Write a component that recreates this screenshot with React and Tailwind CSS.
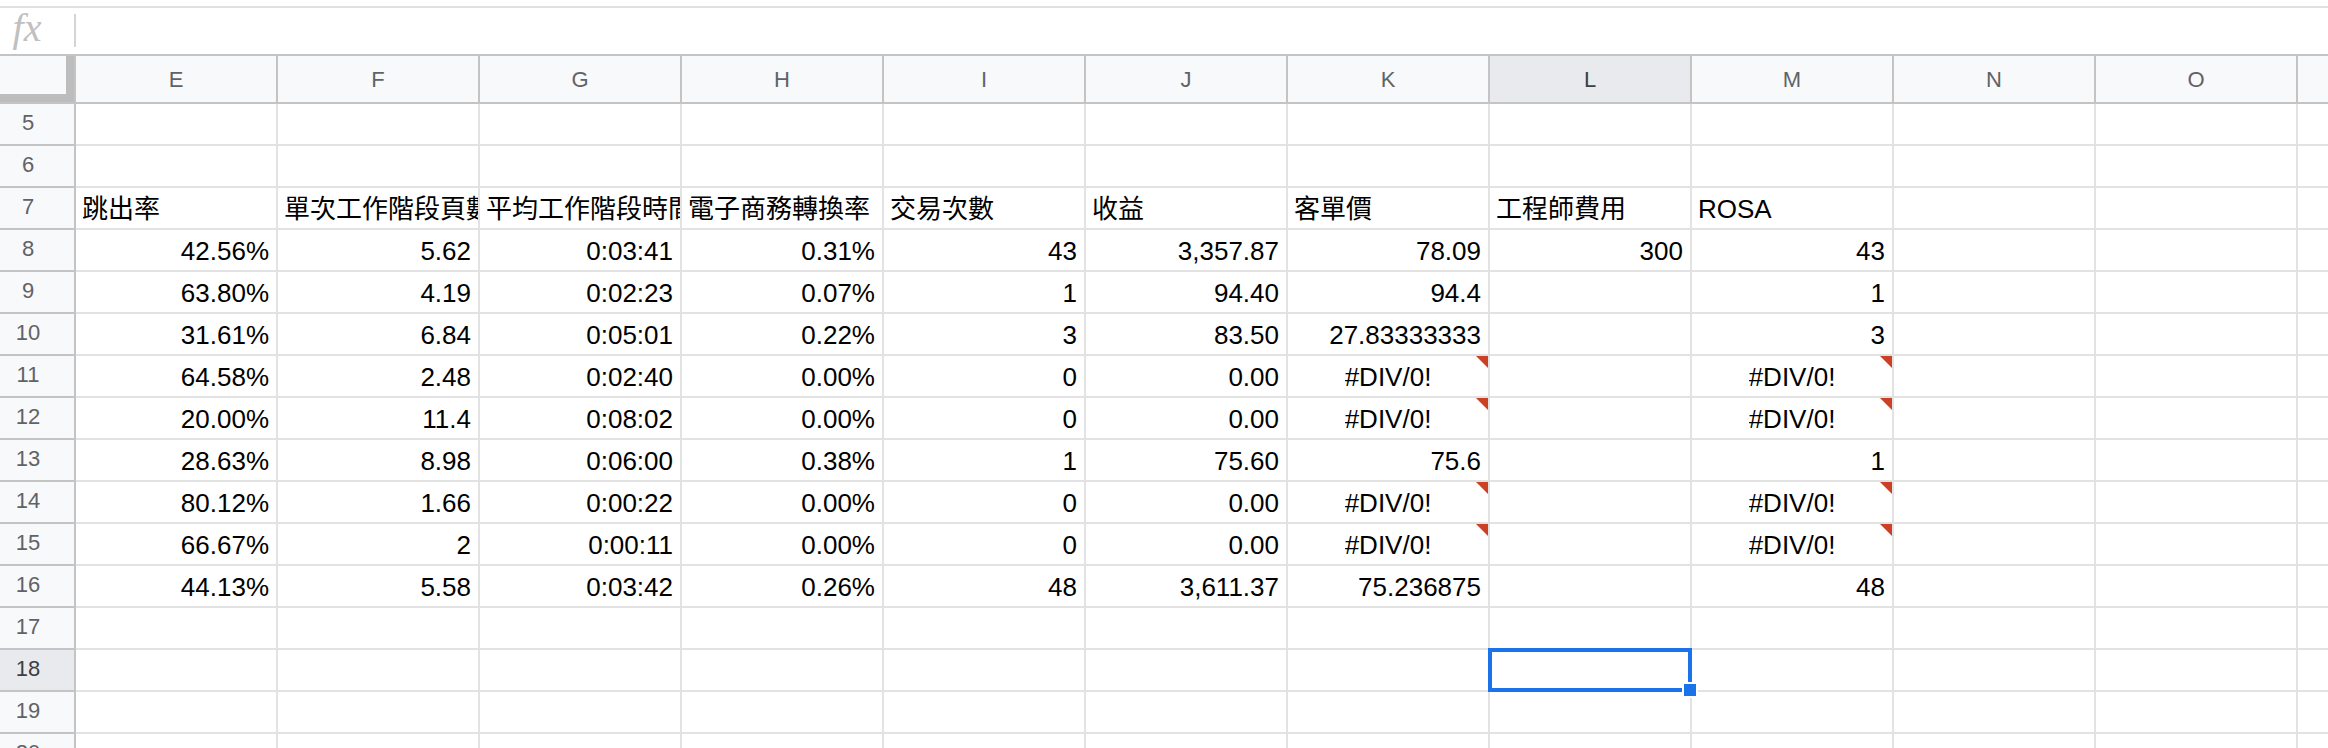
import React from "react";

const COLS = ["E", "F", "G", "H", "I", "J", "K", "L", "M", "N", "O"];

// each cell: [text, align] ; align: "l" left, "r" right, "e" error (centered + red corner)
const ROWS = [
  { n: 5, cells: [] },
  { n: 6, cells: [] },
  {
    n: 7,
    cells: [
      ["跳出率", "l"],
      ["單次工作階段頁數", "l"],
      ["平均工作階段時間", "l"],
      ["電子商務轉換率", "l"],
      ["交易次數", "l"],
      ["收益", "l"],
      ["客單價", "l"],
      ["工程師費用", "l"],
      ["ROSA", "l"],
    ],
  },
  { n: 8, cells: [["42.56%", "r"], ["5.62", "r"], ["0:03:41", "r"], ["0.31%", "r"], ["43", "r"], ["3,357.87", "r"], ["78.09", "r"], ["300", "r"], ["43", "r"]] },
  { n: 9, cells: [["63.80%", "r"], ["4.19", "r"], ["0:02:23", "r"], ["0.07%", "r"], ["1", "r"], ["94.40", "r"], ["94.4", "r"], null, ["1", "r"]] },
  { n: 10, cells: [["31.61%", "r"], ["6.84", "r"], ["0:05:01", "r"], ["0.22%", "r"], ["3", "r"], ["83.50", "r"], ["27.83333333", "r"], null, ["3", "r"]] },
  { n: 11, cells: [["64.58%", "r"], ["2.48", "r"], ["0:02:40", "r"], ["0.00%", "r"], ["0", "r"], ["0.00", "r"], ["#DIV/0!", "e"], null, ["#DIV/0!", "e"]] },
  { n: 12, cells: [["20.00%", "r"], ["11.4", "r"], ["0:08:02", "r"], ["0.00%", "r"], ["0", "r"], ["0.00", "r"], ["#DIV/0!", "e"], null, ["#DIV/0!", "e"]] },
  { n: 13, cells: [["28.63%", "r"], ["8.98", "r"], ["0:06:00", "r"], ["0.38%", "r"], ["1", "r"], ["75.60", "r"], ["75.6", "r"], null, ["1", "r"]] },
  { n: 14, cells: [["80.12%", "r"], ["1.66", "r"], ["0:00:22", "r"], ["0.00%", "r"], ["0", "r"], ["0.00", "r"], ["#DIV/0!", "e"], null, ["#DIV/0!", "e"]] },
  { n: 15, cells: [["66.67%", "r"], ["2", "r"], ["0:00:11", "r"], ["0.00%", "r"], ["0", "r"], ["0.00", "r"], ["#DIV/0!", "e"], null, ["#DIV/0!", "e"]] },
  { n: 16, cells: [["44.13%", "r"], ["5.58", "r"], ["0:03:42", "r"], ["0.26%", "r"], ["48", "r"], ["3,611.37", "r"], ["75.236875", "r"], null, ["48", "r"]] },
  { n: 17, cells: [] },
  { n: 18, cells: [], selected: true },
  { n: 19, cells: [] },
  { n: 20, cells: [] },
];

function Cell({ cell, selected }) {
  const align = cell ? cell[1] : "r";
  return (
    <div
      className={
        "relative w-[202px] h-[42px] shrink-0 border-r-2 border-b-2 border-[#e2e2e2] flex items-end pb-[4px] text-[26px] leading-[30px] text-black whitespace-nowrap " +
        (align === "l" ? "justify-start pl-[6px]" : align === "e" ? "justify-center" : "justify-end pr-[7px]")
      }
    >
      {cell && <span className="overflow-hidden">{cell[0]}</span>}
      {align === "e" && (
        <div className="absolute top-0 right-0 w-0 h-0 border-t-[12px] border-t-[#cc4125] border-l-[12px] border-l-transparent" />
      )}
      {selected && (
        <>
          <div className="absolute -left-[2px] -top-[2px] w-[204px] h-[44px] border-4 border-[#1a73e8] z-10" />
          <div className="absolute left-[192px] top-[32px] w-[16px] h-[16px] bg-[#1a73e8] border-2 border-white z-20" />
        </>
      )}
    </div>
  );
}

export default function App() {
  return (
    <div className="w-[2328px] h-[748px] overflow-hidden bg-white font-['Liberation_Sans','Noto_Sans_CJK_TC',sans-serif]">
      <div className="h-[6px]" />
      {/* formula bar */}
      <div className="h-[50px] border-t-2 border-b-2 border-t-[#e0e0e0] border-b-[#c4c4c4] flex items-start">
        <div className="w-[74px] h-full flex justify-center pr-[20px]">
          <span className="font-['Liberation_Serif',serif] italic text-[40px] leading-[40px] text-[#c0c0c0]">fx</span>
        </div>
        <div className="w-[2px] h-[33px] mt-[6px] bg-[#d5d5d5]" />
      </div>

      {/* column headers */}
      <div className="flex h-[48px]">
        <div className="w-[76px] h-[48px] shrink-0 bg-[#f8f9fa] border-r-2 border-b-2 border-[#c4c4c4]">
          <div className="w-[74px] h-[46px] border-r-[8px] border-b-[8px] border-[#bdbdbd]" />
        </div>
        {COLS.map((c) => (
          <div
            key={c}
            className={
              "w-[202px] h-[48px] shrink-0 border-r-2 border-b-2 border-[#c4c4c4] flex items-center justify-center text-[22px] " +
              (c === "L" ? "bg-[#e8eaed] text-[#3c4043]" : "bg-[#f8f9fa] text-[#5f6368]")
            }
          >
            {c}
          </div>
        ))}
        <div className="flex-1 h-[48px] bg-[#f8f9fa] border-b-2 border-[#c4c4c4]" />
      </div>

      {/* rows */}
      {ROWS.map((row) => (
        <div key={row.n} className="flex h-[42px]">
          <div
            className={
              "w-[76px] h-[42px] shrink-0 border-r-2 border-b-2 border-[#c4c4c4] flex items-center pb-[3px] text-[22px] " +
              (row.selected ? "bg-[#e8eaed] text-[#3c4043]" : "bg-[#f8f9fa] text-[#5f6368]")
            }
          >
            <div className="w-[56px] text-center">{row.n}</div>
          </div>
          {COLS.map((c, i) => (
            <Cell key={c} cell={row.cells[i]} selected={row.selected && c === "L"} />
          ))}
          <div className="flex-1 h-[42px] border-b-2 border-[#e2e2e2]" />
        </div>
      ))}
    </div>
  );
}
